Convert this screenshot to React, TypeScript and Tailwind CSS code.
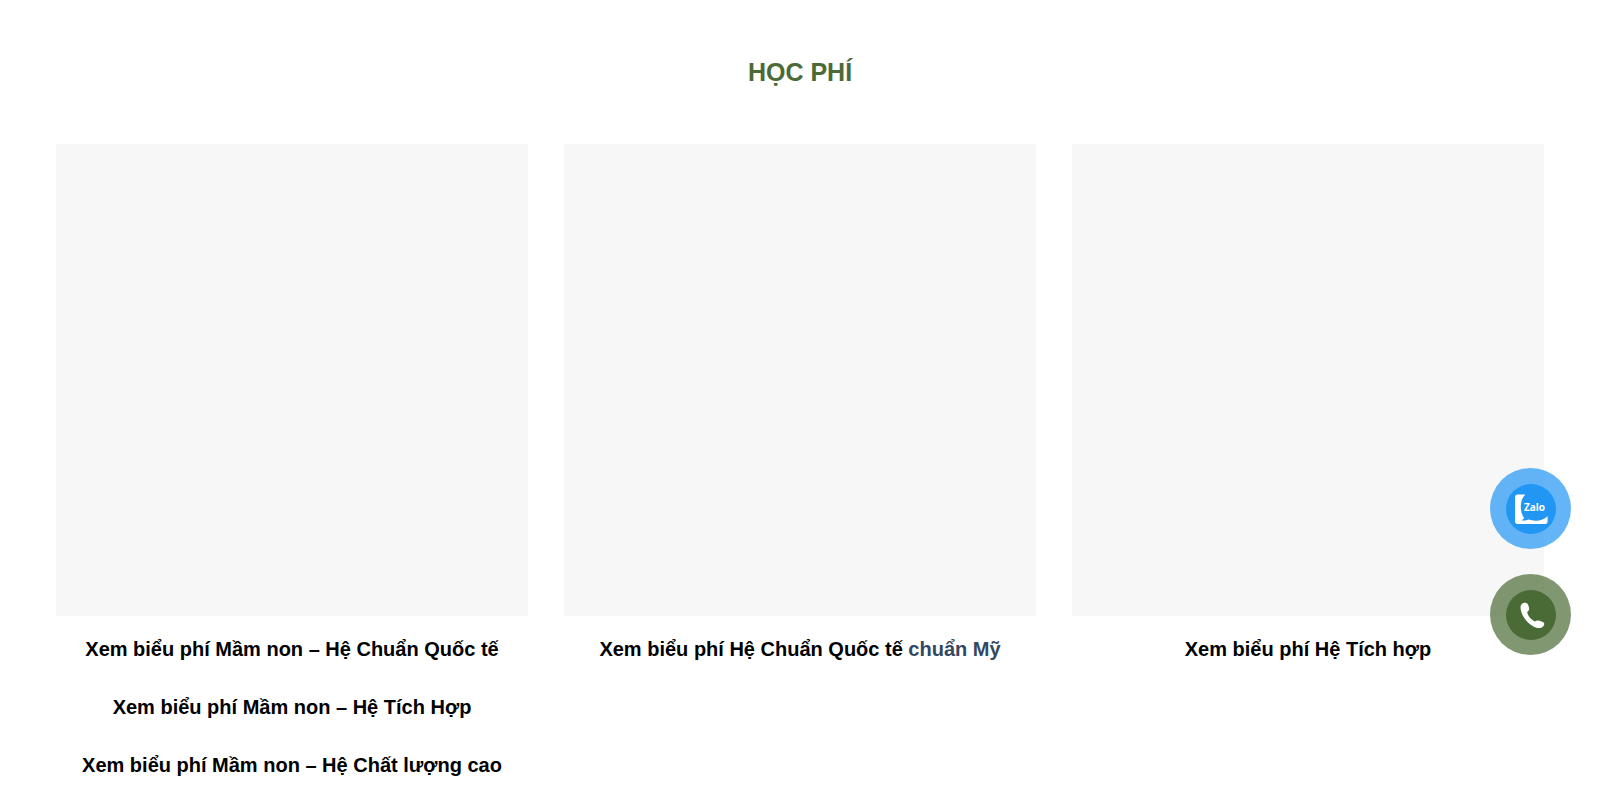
type FeeLink = {
  label: string
  accent?: string
}

type FeeGroup = {
  id: string
  links: FeeLink[]
}

const feeGroups: FeeGroup[] = [
  {
    id: 'mam-non',
    links: [
      { label: 'Xem biểu phí Mầm non – Hệ Chuẩn Quốc tế' },
      { label: 'Xem biểu phí Mầm non – Hệ Tích Hợp' },
      { label: 'Xem biểu phí Mầm non – Hệ Chất lượng cao' },
    ],
  },
  {
    id: 'quoc-te',
    links: [{ label: 'Xem biểu phí Hệ Chuẩn Quốc tế', accent: 'chuẩn Mỹ' }],
  },
  {
    id: 'tich-hop',
    links: [{ label: 'Xem biểu phí Hệ Tích hợp' }],
  },
]

function ZaloIcon() {
  return (
    <svg viewBox="0 0 50 50" className="w-full h-full" aria-hidden="true">
      <path
        d="M11.4 10.5H19.4C16.2 13.4 14.8 17.6 14.8 22.4C14.8 27.3 16 31 18.2 34C17.4 35.2 16.4 35.8 15.4 36.2C18 36.8 20.5 36.4 22.5 35.6C27 37.2 32.4 37 36.4 35.4C38.6 34.5 40.4 33.4 41.6 32V37.6C41.6 39 40.6 40 39.2 40H11.4C10 40 9 39 9 37.6V12.9C9 11.5 10 10.5 11.4 10.5Z"
        fill="#fff"
      />
      <text
        x="28.5"
        y="26.5"
        textAnchor="middle"
        fontSize="10"
        fontWeight="700"
        fill="#fff"
        className="font-['Open_Sans',sans-serif]"
      >
        Zalo
      </text>
    </svg>
  )
}

function PhoneIcon() {
  return (
    <svg viewBox="0 0 50 50" className="w-full h-full" aria-hidden="true">
      <path
        d="M17.2 13.1C19.4 12.1 21.4 12.9 22.1 14.8L23 17.5C23.6 19.4 22.8 20.9 21.2 22C21.6 25.5 25.2 29.9 29 31.6C30.3 30.4 31.6 30.2 33.3 30.8L36.4 31.8C38.4 32.5 38.8 34 37.8 35.5C36.4 37.9 33.4 38.6 30.4 37.7C22.6 35.4 15.6 26.6 14.6 18.8C14.2 16.2 15 14.1 17.2 13.1Z"
        fill="#fff"
      />
    </svg>
  )
}

export default function App() {
  return (
    <main className="bg-white font-['Liberation_Sans',Arial,sans-serif] font-bold">
      <section className="px-14 pt-14">
        <h2 className="text-center text-[25px] leading-8 text-[#4a6b35]">HỌC PHÍ</h2>

        <div className="mt-14 grid grid-cols-3 gap-9">
          {feeGroups.map((group) => (
            <div key={group.id}>
              <div className="aspect-square bg-[#f7f7f7]" />
              <ul className="mt-[18px] flex flex-col gap-7 text-center text-xl leading-[30px] text-black">
                {group.links.map((link) => (
                  <li key={link.label}>
                    <a href="#">
                      {link.label}
                      {link.accent && <span className="text-[#334862]"> {link.accent}</span>}
                    </a>
                  </li>
                ))}
              </ul>
            </div>
          ))}
        </div>
      </section>

      {/* Floating contact buttons */}
      <div className="fixed right-[29px] bottom-[135px] flex flex-col gap-[25px]">
        <a
          href="#zalo"
          aria-label="Zalo"
          className="flex size-[81px] items-center justify-center rounded-full bg-[#2196f3]/70"
        >
          <span className="size-[50px] rounded-full bg-[#2196f3]">
            <ZaloIcon />
          </span>
        </a>
        <a
          href="#phone"
          aria-label="Gọi điện"
          className="flex size-[81px] items-center justify-center rounded-full bg-[#4a6b35]/70"
        >
          <span className="size-[50px] rounded-full bg-[#4a6b35]">
            <PhoneIcon />
          </span>
        </a>
      </div>
    </main>
  )
}
